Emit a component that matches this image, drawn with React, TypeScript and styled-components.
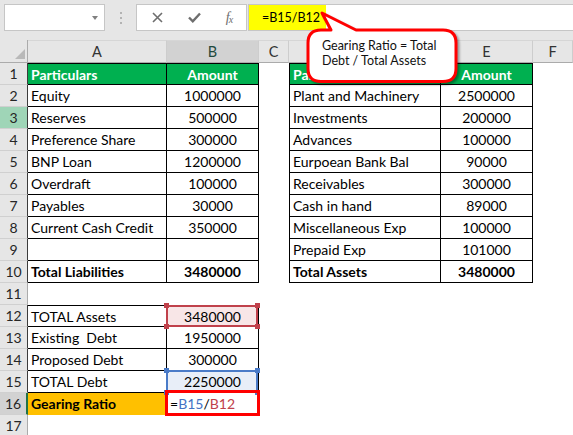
import React from "react";
import styled, { createGlobalStyle, css } from "styled-components";

const GlobalStyle = createGlobalStyle`
  html, body {
    margin: 0;
    padding: 0;
    background: #fff;
  }
  body {
    font-family: Lato, "Liberation Sans", sans-serif;
    overflow: hidden;
  }
`;

const Window = styled.div`
  position: relative;
  width: 573px;
  height: 435px;
  overflow: hidden;
  background: #fff;
`;

/* ---------- formula bar ---------- */

const FormulaBar = styled.div`
  display: flex;
  align-items: flex-start;
  height: 40px;
  padding: 4px 0 0 4px;
  box-sizing: border-box;
  background: #e6e6e6;
`;

const NameBox = styled.div`
  display: flex;
  align-items: center;
  justify-content: flex-end;
  width: 101px;
  height: 27px;
  padding-right: 6px;
  box-sizing: border-box;
  background: #fff;
  border: 1px solid #c6c6c6;
`;

const DropArrow = styled.span`
  width: 0;
  height: 0;
  border-left: 3.5px solid transparent;
  border-right: 3.5px solid transparent;
  border-top: 4px solid #808080;
`;

const Grip = styled.div`
  display: flex;
  flex-direction: column;
  gap: 3px;
  margin: 8px 14px 0 15px;

  span {
    width: 2px;
    height: 2px;
    background: #b3b3b3;
  }
`;

const FuncBox = styled.div`
  display: grid;
  grid-template-columns: 40px 35px 34px;
  place-items: center;
  width: 111px;
  height: 27px;
  box-sizing: border-box;
  background: #fff;
  border: 1px solid #c6c6c6;
  color: #6e6e6e;
`;

const Fx = styled.span`
  font-family: "Liberation Serif", serif;
  font-style: italic;
  font-size: 14px;
  color: #6e6e6e;
  letter-spacing: -1px;

  sub {
    font-size: 10px;
    vertical-align: -1px;
  }
`;

const FormulaInput = styled.div`
  flex: 1;
  display: flex;
  height: 27px;
  margin-left: 1px;
  box-sizing: border-box;
  background: #fff;
  border: 1px solid #c6c6c6;
  border-right: none;
`;

const FormulaText = styled.div`
  width: 77px;
  padding-left: 13px;
  box-sizing: border-box;
  background: #ffff00;
  font-size: 12.5px;
  line-height: 25px;
  color: #000;
`;

/* ---------- sheet grid ---------- */

const Sheet = styled.div`
  display: grid;
  grid-template-columns: 28px 139px 92px 30px 152px 92px 40px;
  grid-template-rows: 23px repeat(17, 22px);
`;

const Corner = styled.div`
  position: relative;
  background: #e6e6e6;
  border-right: 1px solid #ababab;
  border-bottom: 1px solid #ababab;
  box-sizing: border-box;

  &::after {
    content: "";
    position: absolute;
    right: 2px;
    bottom: 3px;
    border-left: 10px solid transparent;
    border-bottom: 10px solid #b9b9b9;
  }
`;

const ColHead = styled.div<{ $active?: boolean }>`
  display: flex;
  align-items: center;
  justify-content: center;
  box-sizing: border-box;
  background: ${(p) => (p.$active ? "#d2d2d2" : "#e6e6e6")};
  border-right: 1px solid #cdcdcd;
  border-bottom: 1px solid #ababab;
  border-top: 1px solid #d6d6d6;
  font-size: 14.5px;
  color: ${(p) => (p.$active ? "#1f4a3c" : "#333")};
`;

type RowTone = "plain" | "green" | "active";

const RowHead = styled.div<{ $tone: RowTone; $edge?: boolean }>`
  display: flex;
  align-items: center;
  justify-content: center;
  box-sizing: border-box;
  background: ${(p) =>
    p.$tone === "green" ? "#9fd5b7" : p.$tone === "active" ? "#d2d2d2" : "#e6e6e6"};
  border-bottom: 1px solid #d0d0d0;
  border-right: ${(p) =>
    p.$tone === "active"
      ? "2px solid #217346"
      : p.$edge
      ? "1px solid #3c3c3c"
      : "1px solid #ababab"};
  font-size: 14px;
  color: #262626;
`;

type FrameTone = "red" | "blue" | "edit";

const frameColor: Record<FrameTone, string> = {
  red: "#c0414b",
  blue: "#4a7bc8",
  edit: "#ff0000",
};

const Cell = styled.div<{
  $center?: boolean;
  $bold?: boolean;
  $fill?: string;
  $ink?: string;
  $box?: boolean;
  $top?: boolean;
  $left?: boolean;
}>`
  position: relative;
  box-sizing: border-box;
  padding: 0 3px;
  font-size: 14px;
  line-height: 21px;
  white-space: pre;
  text-align: ${(p) => (p.$center ? "center" : "left")};
  font-weight: ${(p) => (p.$bold ? 700 : 400)};
  color: ${(p) => p.$ink ?? "#000"};
  background: ${(p) => p.$fill ?? "transparent"};
  ${(p) =>
    p.$box &&
    css`
      border-right: 1px solid #000;
      border-bottom: 1px solid #000;
    `}
  ${(p) => p.$top && "border-top: 1px solid #000;"}
  ${(p) => p.$left && "border-left: 1px solid #000;"}
`;

const Frame = styled.span<{ $tone: FrameTone }>`
  position: absolute;
  box-sizing: border-box;
  pointer-events: none;
  ${(p) =>
    p.$tone === "edit"
      ? css`
          inset: -3px -1px -1px -2px;
          border: 3px solid ${frameColor.edit};
          z-index: 2;
        `
      : css`
          inset: -1px 0 -1px -1px;
          border: 2px solid ${frameColor[p.$tone]};
          z-index: 1;
        `}
`;

const Handle = styled.i<{ $tone: FrameTone; $v: "top" | "bottom"; $h: "left" | "right" }>`
  position: absolute;
  width: 5px;
  height: 5px;
  background: ${(p) => frameColor[p.$tone]};
  ${(p) => p.$v}: -4px;
  ${(p) => p.$h}: -4px;
`;

const EditText = styled.span`
  position: relative;
  z-index: 3;
`;

const Ref = styled.span<{ $c: string }>`
  color: ${(p) => p.$c};
`;

/* ---------- callout ---------- */

const Callout = styled.div`
  position: absolute;
  left: 305px;
  top: 8px;
  width: 160px;
  height: 82px;
  z-index: 5;
`;

const CalloutShape = styled.svg`
  position: absolute;
  inset: 0;
  overflow: visible;
  filter: drop-shadow(2px 2px 1px rgba(0, 0, 0, 0.35));
`;

const CalloutText = styled.div`
  position: relative;
  display: flex;
  flex-direction: column;
  padding: 30px 0 0 17px;
  font-size: 12.5px;
  line-height: 15px;
  color: #111;
  white-space: nowrap;
`;

/* ---------- data ---------- */

type Spec = {
  text?: React.ReactNode;
  center?: boolean;
  bold?: boolean;
  fill?: string;
  ink?: string;
  box?: boolean;
  top?: boolean;
  left?: boolean;
  frame?: FrameTone;
};

const blank: Spec = {};
const head = (text: string, center = false): Spec => ({
  text,
  center,
  bold: true,
  fill: "#00b050",
  ink: "#fff",
  box: true,
  top: true,
});
const item = (text: string, bold = false): Spec => ({ text, bold, box: true });
const amt = (text: string, bold = false): Spec => ({ text, bold, center: true, box: true });

const pair = (a: string, b: string, d: string, e: string, bold = false): Spec[] => [
  item(a, bold),
  amt(b, bold),
  blank,
  { ...item(d, bold), left: true },
  amt(e, bold),
  blank,
];

const formula = (
  <EditText>
    =<Ref $c="#4472c4">B15</Ref>/<Ref $c="#c0414b">B12</Ref>
  </EditText>
);

const rows: { tone: RowTone; edge?: boolean; cells: Spec[] }[] = [
  {
    tone: "plain",
    edge: true,
    cells: [head("Particulars"), head("Amount", true), blank, { ...head("Particulars"), left: true }, head("Amount", true), blank],
  },
  { tone: "plain", edge: true, cells: pair("Equity", "1000000", "Plant and Machinery", "2500000") },
  { tone: "green", edge: true, cells: pair("Reserves", "500000", "Investments", "200000") },
  { tone: "plain", edge: true, cells: pair("Preference Share", "300000", "Advances", "100000") },
  { tone: "plain", edge: true, cells: pair("BNP Loan", "1200000", "Eurpoean Bank Bal", "90000") },
  { tone: "plain", edge: true, cells: pair("Overdraft", "100000", "Receivables", "300000") },
  { tone: "plain", edge: true, cells: pair("Payables", "30000", "Cash in hand", "89000") },
  { tone: "plain", edge: true, cells: pair("Current Cash Credit", "350000", "Miscellaneous Exp", "100000") },
  { tone: "plain", edge: true, cells: pair("", "", "Prepaid Exp", "101000") },
  { tone: "plain", edge: true, cells: pair("Total Liabilities", "3480000", "Total Assets", "3480000", true) },
  { tone: "plain", cells: [blank, blank, blank, blank, blank, blank] },
  {
    tone: "plain",
    edge: true,
    cells: [
      { ...item("TOTAL Assets"), top: true },
      { ...amt("3480000"), top: true, frame: "red", fill: "#f8e6e7" },
      blank,
      blank,
      blank,
      blank,
    ],
  },
  { tone: "plain", edge: true, cells: [item("Existing  Debt"), amt("1950000"), blank, blank, blank, blank] },
  { tone: "plain", edge: true, cells: [item("Proposed Debt"), amt("300000"), blank, blank, blank, blank] },
  {
    tone: "plain",
    edge: true,
    cells: [item("TOTAL Debt"), { ...amt("2250000"), frame: "blue", fill: "#e8eef8" }, blank, blank, blank, blank],
  },
  {
    tone: "active",
    cells: [
      { text: "Gearing Ratio", bold: true, fill: "#ffc000" },
      { text: formula, frame: "edit" },
      blank,
      blank,
      blank,
      blank,
    ],
  },
  { tone: "plain", cells: [blank, blank, blank, blank, blank, blank] },
];

const columns = ["A", "B", "C", "D", "E", "F"];

const SheetCell = ({ spec }: { spec: Spec }) => (
  <Cell
    $center={spec.center}
    $bold={spec.bold}
    $fill={spec.fill}
    $ink={spec.ink}
    $box={spec.box}
    $top={spec.top}
    $left={spec.left}
  >
    {spec.frame && (
      <Frame $tone={spec.frame}>
        {spec.frame !== "edit" && (
          <>
            <Handle $tone={spec.frame} $v="top" $h="left" />
            <Handle $tone={spec.frame} $v="top" $h="right" />
            <Handle $tone={spec.frame} $v="bottom" $h="left" />
            <Handle $tone={spec.frame} $v="bottom" $h="right" />
          </>
        )}
      </Frame>
    )}
    {spec.text}
  </Cell>
);

export default function App() {
  return (
    <Window>
      <GlobalStyle />
      <FormulaBar>
        <NameBox>
          <DropArrow />
        </NameBox>
        <Grip>
          <span />
          <span />
          <span />
        </Grip>
        <FuncBox>
          <svg width="11" height="11" viewBox="0 0 11 11">
            <path d="M1 1 L10 10 M10 1 L1 10" stroke="#6e6e6e" strokeWidth="1.6" />
          </svg>
          <svg width="13" height="11" viewBox="0 0 13 11">
            <path d="M1 5.5 L4.8 9.3 L12 1.5" fill="none" stroke="#6e6e6e" strokeWidth="2.4" />
          </svg>
          <Fx>
            f<sub>x</sub>
          </Fx>
        </FuncBox>
        <FormulaInput>
          <FormulaText>=B15/B12</FormulaText>
        </FormulaInput>
      </FormulaBar>

      <Sheet>
        <Corner />
        {columns.map((c) => (
          <ColHead key={c} $active={c === "B"}>
            {c}
          </ColHead>
        ))}
        {rows.map((row, i) => (
          <React.Fragment key={i}>
            <RowHead $tone={row.tone} $edge={row.edge}>
              {i + 1}
            </RowHead>
            {row.cells.map((spec, j) => (
              <SheetCell key={j} spec={spec} />
            ))}
          </React.Fragment>
        ))}
      </Sheet>

      <Callout>
        <CalloutShape width="160" height="82" viewBox="0 0 160 82">
          <path
            d="M16 22 L26 22 L17 5 L51 22 L138 22 Q151 22 151 35 L151 60.5 Q151 73.5 138 73.5 L16 73.5 Q3 73.5 3 60.5 L3 35 Q3 22 16 22 Z"
            fill="#fff"
            stroke="#ff0000"
            strokeWidth="3"
            strokeLinejoin="round"
          />
        </CalloutShape>
        <CalloutText>
          <span>Gearing Ratio = Total</span>
          <span>Debt / Total Assets</span>
        </CalloutText>
      </Callout>
    </Window>
  );
}
